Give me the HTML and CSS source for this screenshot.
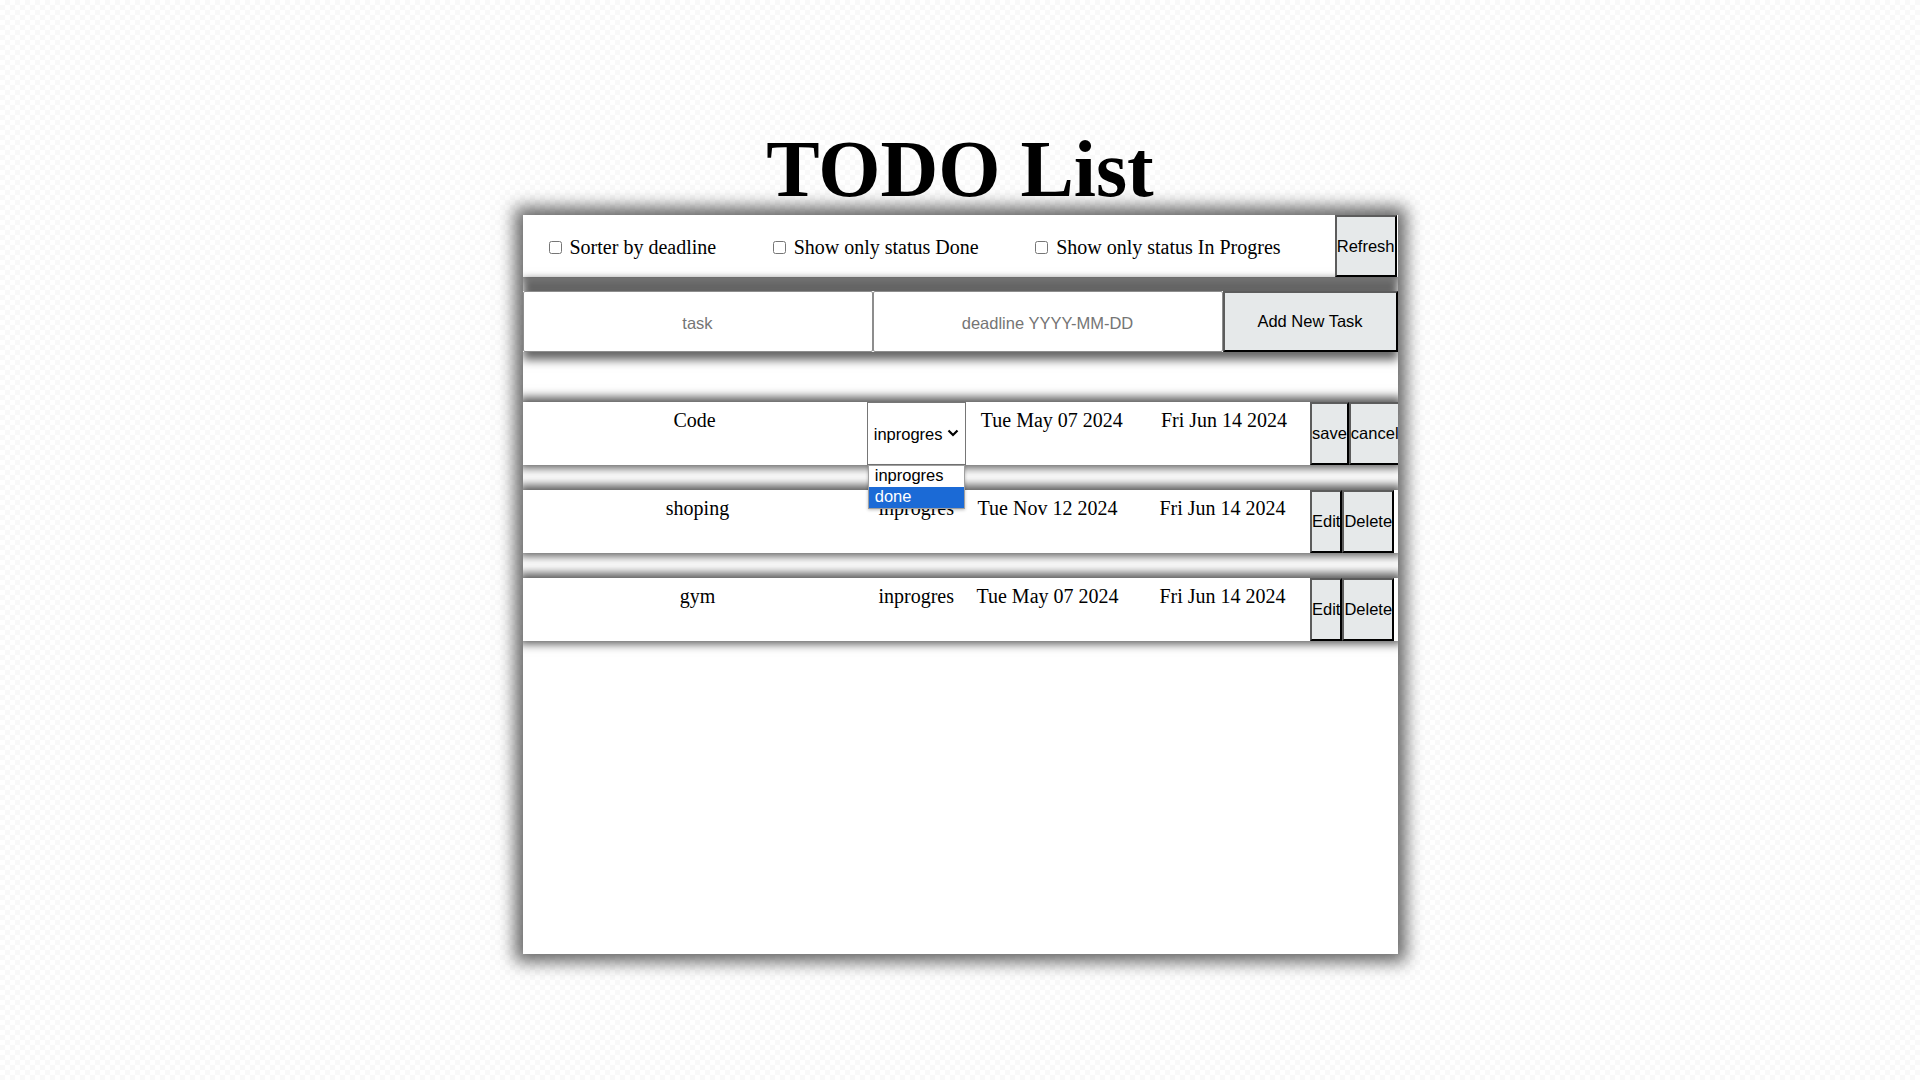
FILE: index.html
```html
<!DOCTYPE html>
<html lang="en">
<head>
<meta charset="utf-8">
<title>TODO List</title>
<link rel="stylesheet" href="styles.css">
</head>
<body>
<h1 class="title">TODO List</h1>
<main class="board">
  <div class="filters">
    <label class="filter"><input type="checkbox"> Sorter by deadline</label>
    <label class="filter"><input type="checkbox"> Show only status Done</label>
    <label class="filter"><input type="checkbox"> Show only status In Progres</label>
    <button class="btn refresh" type="button">Refresh</button>
  </div>
  <form class="add-form">
    <input class="field" type="text" placeholder="task">
    <input class="field" type="text" placeholder="deadline YYYY-MM-DD">
    <button class="btn add" type="button">Add New Task</button>
  </form>
  <div class="tasks">
    <div class="task">
      <span class="cell name">Code</span>
      <div class="cell status editing">
        <select class="status-select">
          <option>inprogres</option>
          <option>done</option>
        </select>
        <svg class="chevron" width="12" height="8" viewBox="0 0 12 8" aria-hidden="true"><polyline points="1.5,1.5 6,6 10.5,1.5" fill="none" stroke="#000" stroke-width="2.2"/></svg>
        <ul class="popup">
          <li class="opt">inprogres</li>
          <li class="opt active">done</li>
        </ul>
      </div>
      <span class="cell date">Tue May 07 2024</span>
      <span class="cell date">Fri Jun 14 2024</span>
      <div class="cell actions">
        <button class="btn" type="button">save</button><button class="btn" type="button">cancel</button>
      </div>
    </div>
    <div class="task">
      <span class="cell name">shoping</span>
      <span class="cell status">inprogres</span>
      <span class="cell date">Tue Nov 12 2024</span>
      <span class="cell date">Fri Jun 14 2024</span>
      <div class="cell actions">
        <button class="btn" type="button">Edit</button><button class="btn" type="button">Delete</button>
      </div>
    </div>
    <div class="task">
      <span class="cell name">gym</span>
      <span class="cell status">inprogres</span>
      <span class="cell date">Tue May 07 2024</span>
      <span class="cell date">Fri Jun 14 2024</span>
      <div class="cell actions">
        <button class="btn" type="button">Edit</button><button class="btn" type="button">Delete</button>
      </div>
    </div>
  </div>
</main>
</body>
</html>
```

FILE: styles.css
```css
html, body {
  margin: 0;
  padding: 0;
}

body {
  min-height: 1080px;
  font-family: "Liberation Serif", "Times New Roman", serif;
  font-size: 20px;
  color: #000;
  background-color: #fff;
  background-image: repeating-conic-gradient(#f9f9f9 0 25%, #ffffff 0 50%);
  background-size: 10px 10px;
}

.title {
  margin: 124px 0 0;
  font-size: 80px;
  font-weight: bold;
  line-height: normal;
  text-align: center;
}

.board {
  width: 875px;
  height: 739px;
  margin: 0 auto;
  overflow: hidden;
  background: #fff;
  box-shadow: 0 0 16px 8px rgba(0, 0, 0, 0.6);
}

/* generic button look */
.btn {
  font-family: "Liberation Sans", Arial, sans-serif;
  font-size: 16.5px;
  color: #000;
  padding: 0;
  margin: 0;
  background: #e6e9ea;
  border-width: 2px;
  border-style: solid;
  border-color: #5c5c5c #000 #000 #5c5c5c;
  border-radius: 0;
}

/* filter bar */
.filters {
  display: flex;
  align-items: stretch;
  gap: 52.5px;
  height: 62px;
  padding-left: 22px;
  padding-right: 1px;
  box-sizing: border-box;
  background: #fff;
  box-shadow: 0 -1px 9px 4px rgba(0, 0, 0, 0.65);
}

.filter {
  display: flex;
  align-items: center;
  padding-top: 2px;
  white-space: pre;
}

.filter input {
  margin: 3px 3px 3px 4px;
  width: 13px;
  height: 13px;
}

.refresh {
  margin-left: auto;
}

/* add form */
.add-form {
  display: flex;
  height: 61px;
  margin: 14px 0 0;
  background: #fff;
  box-shadow: 0 -12px 8px 0 rgba(0, 0, 0, 0.6), 0 8px 9px 0 rgba(0, 0, 0, 0.6);
}

.field {
  width: 40%;
  box-sizing: border-box;
  margin: 0;
  padding: 4px 0 0;
  border: 1px solid #8d8d8d;
  border-radius: 2px;
  font-family: "Liberation Sans", Arial, sans-serif;
  font-size: 16.5px;
  text-align: center;
  background: #fff;
}

.field::placeholder {
  color: #757575;
}

.add {
  width: 20%;
}

/* task list */
.tasks {
  display: flex;
  flex-direction: column;
  gap: 25px;
  margin-top: 50px;
}

.task {
  display: flex;
  height: 63px;
  background: #fff;
  box-shadow: 0 -1px 9px 4px rgba(0, 0, 0, 0.65);
}

.cell {
  box-sizing: border-box;
  text-align: center;
  padding-top: 7px;
}

.name { width: 40%; }
.status { width: 10%; }
.date { width: 20%; }

.actions {
  width: 10%;
  display: flex;
  padding-top: 0;
}

.status.editing {
  position: relative;
  flex: 0 0 auto;
  width: auto;
  padding-top: 0;
}

.status-select {
  display: block;
  width: 99px;
  height: 100%;
  margin: 0;
  padding: 0 0 0 6px;
  appearance: none;
  -webkit-appearance: none;
  font-family: "Liberation Sans", Arial, sans-serif;
  font-size: 16.5px;
  color: #000;
  background-color: #fff;
  border: 1px solid #767676;
  border-radius: 0;
}

.chevron {
  position: absolute;
  left: 80px;
  top: calc(50% - 5px);
  pointer-events: none;
}

.popup {
  position: absolute;
  top: 100%;
  left: 1px;
  z-index: 5;
  width: 97px;
  margin: 0;
  padding: 0;
  list-style: none;
  background: #fff;
  border: 1px solid #a0a0a0;
  box-sizing: border-box;
  box-shadow: 0 1px 3px rgba(0, 0, 0, 0.25);
  text-align: left;
}

.opt {
  height: 21px;
  line-height: 18px;
  padding-left: 6px;
  font-family: "Liberation Sans", Arial, sans-serif;
  font-size: 16.5px;
  color: #000;
}

.opt.active {
  background: #1b6ad6;
  color: #fff;
}
```
